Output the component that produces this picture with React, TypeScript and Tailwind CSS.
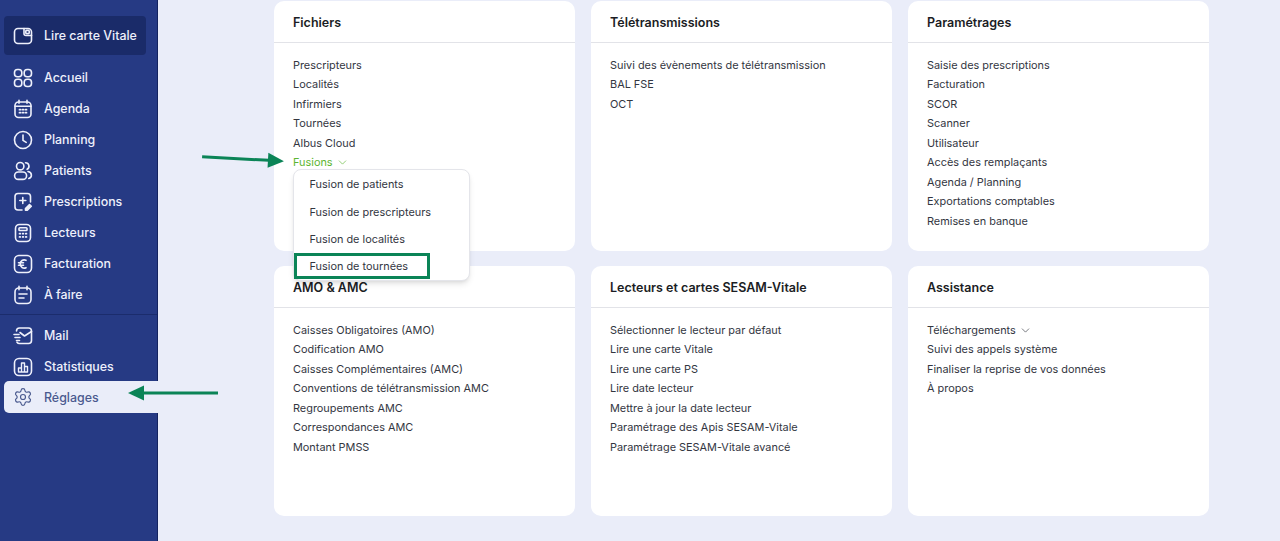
import React from "react";
import { Settings, ChevronDown } from "lucide-react";

const iconProps = {
  width: 20,
  height: 20,
  viewBox: "0 0 20 20",
  fill: "none",
  stroke: "currentColor",
  strokeWidth: 1.6,
  strokeLinecap: "round" as const,
  strokeLinejoin: "round" as const,
};

const CardIcon = () => (
  <svg {...iconProps}>
    <rect x="1.500" y="2.500" width="17" height="15" rx="3.500" />
    <path d="M11 2.500v5a2 2 0 0 0 2 2h5.500" />
    <rect x="12.800" y="4.400" width="3.400" height="3.200" rx="0.800" />
  </svg>
);
const HomeIcon = () => (
  <svg {...iconProps}>
    <rect x="1.500" y="1.500" width="7.300" height="7.300" rx="3" />
    <rect x="11.200" y="1.500" width="7.300" height="7.300" rx="3" />
    <rect x="1.500" y="11.200" width="7.300" height="7.300" rx="3" />
    <rect x="11.200" y="11.200" width="7.300" height="7.300" rx="3" />
  </svg>
);
const AgendaIcon = () => (
  <svg {...iconProps}>
    <rect x="2" y="3" width="16" height="15.500" rx="3.500" />
    <path d="M2 7.200h16M6 1.300v3M14 1.300v3" />
    <path d="M6.500 10.700h1M9.500 10.700h1M12.500 10.700h1M6.500 13.700h1M9.500 13.700h1M12.500 13.700h1" strokeWidth="1.800" />
  </svg>
);
const ClockIcon = () => (
  <svg {...iconProps}>
    <circle cx="10" cy="10" r="8.500" />
    <path d="M10 5v5.400l3.200 2" />
  </svg>
);
const PatientsIcon = () => (
  <svg {...iconProps}>
    <circle cx="7.200" cy="5.200" r="3.700" />
    <rect x="1.600" y="11" width="12" height="7.400" rx="3.700" />
    <path d="M12.500 1.700a3.500 3.500 0 0 1 1.600 6.600M15 10.500c2.200.4 3.400 1.900 3.400 3.700 0 1.600-1 2.800-2.600 3.300" />
  </svg>
);
const PrescriptionIcon = () => (
  <svg {...iconProps}>
    <path d="M9 18H5a3 3 0 0 1-3-3V4.500a3 3 0 0 1 3-3h9.500a3 3 0 0 1 3 3V10" />
    <path d="M9.800 5.500v6M6.800 8.500h6" />
    <path d="M12.500 18.300v-1.800l4-4 1.800 1.800-4 4z" fill="currentColor" />
  </svg>
);
const LecteurIcon = () => (
  <svg {...iconProps}>
    <rect x="2.500" y="1.500" width="15" height="17" rx="4" />
    <rect x="6" y="4.700" width="8" height="2.800" rx="0.800" />
    <path d="M6.500 10.700h.8M9.600 10.700h.8M12.700 10.700h.8M6.500 13.900h.8M9.600 13.900h.8M12.700 13.900h.8" strokeWidth="1.700" />
  </svg>
);
const EuroIcon = () => (
  <svg {...iconProps}>
    <rect x="1.500" y="1.500" width="17" height="17" rx="4.500" />
    <path d="M13 6.300a4 4 0 0 0-5.800 3.700A4 4 0 0 0 13 13.700M5.500 8.800h5M5.500 11.200h5" />
  </svg>
);
const TodoIcon = () => (
  <svg {...iconProps}>
    <rect x="2" y="3" width="16" height="15.500" rx="4" />
    <path d="M6 1.300v3.400M14 1.300v3.400M6 9h8M6 13h5" />
  </svg>
);
const MailIcon = () => (
  <svg {...iconProps}>
    <path d="M3.500 5V5a3 3 0 0 1 3-3h9a3 3 0 0 1 3 3v9.500a3 3 0 0 1-3 3h-9a3 3 0 0 1-2.500-1.300" />
    <path d="M7 6.500l4.500 3.500 7-4.500" />
    <path d="M1 8.500h5M2 11.500h5M3.500 14.500h3" />
  </svg>
);
const StatsIcon = () => (
  <svg {...iconProps}>
    <rect x="1.500" y="1.500" width="17" height="17" rx="4.500" />
    <path d="M5.500 15v-4h3V15M8.500 15V6h3v9M11.500 15v-5.500h3V15H5.500" strokeWidth="1.400" />
  </svg>
);

const navTop = [
  { label: "Accueil", icon: <HomeIcon /> },
  { label: "Agenda", icon: <AgendaIcon /> },
  { label: "Planning", icon: <ClockIcon /> },
  { label: "Patients", icon: <PatientsIcon /> },
  { label: "Prescriptions", icon: <PrescriptionIcon /> },
  { label: "Lecteurs", icon: <LecteurIcon /> },
  { label: "Facturation", icon: <EuroIcon /> },
  { label: "À faire", icon: <TodoIcon /> },
];

const NavItem = ({ label, icon }: { label: string; icon: React.ReactNode }) => (
  <div className="flex h-[31px] items-center gap-[11px] pl-[13px] text-[12.4px] font-medium text-[#eef0fb]">
    <span className="shrink-0">{icon}</span>
    <span className="pt-px">{label}</span>
  </div>
);

const cards = [
  {
    title: "Fichiers",
    items: ["Prescripteurs", "Localités", "Infirmiers", "Tournées", "Albus Cloud"],
    fusions: true,
  },
  {
    title: "Télétransmissions",
    items: ["Suivi des évènements de télétransmission", "BAL FSE", "OCT"],
  },
  {
    title: "Paramétrages",
    items: [
      "Saisie des prescriptions",
      "Facturation",
      "SCOR",
      "Scanner",
      "Utilisateur",
      "Accès des remplaçants",
      "Agenda / Planning",
      "Exportations comptables",
      "Remises en banque",
    ],
  },
  {
    title: "AMO & AMC",
    items: [
      "Caisses Obligatoires (AMO)",
      "Codification AMO",
      "Caisses Complémentaires (AMC)",
      "Conventions de télétransmission AMC",
      "Regroupements AMC",
      "Correspondances AMC",
      "Montant PMSS",
    ],
  },
  {
    title: "Lecteurs et cartes SESAM-Vitale",
    items: [
      "Sélectionner le lecteur par défaut",
      "Lire une carte Vitale",
      "Lire une carte PS",
      "Lire date lecteur",
      "Mettre à jour la date lecteur",
      "Paramétrage des Apis SESAM-Vitale",
      "Paramétrage SESAM-Vitale avancé",
    ],
  },
  {
    title: "Assistance",
    items: ["Téléchargements", "Suivi des appels système", "Finaliser la reprise de vos données", "À propos"],
  },
];

const fusionMenu = ["Fusion de patients", "Fusion de prescripteurs", "Fusion de localités", "Fusion de tournées"];

// green annotation arrows drawn over the page
const Arrow = ({ className, flip, width }: { className: string; flip?: boolean; width: number }) => (
  <svg
    className={`absolute ${className}`}
    width={width}
    height="16"
    viewBox={`0 0 ${width} 16`}
    fill="#0b8457"
    style={flip ? { transform: "scaleX(-1)" } : undefined}
  >
    <path d={`M0 6.500h${width - 15}v3H0z`} />
    <path d={`M${width - 16} 0.500l16 7.500-16 7.500z`} />
  </svg>
);

export default function App() {
  return (
    <div
      className="relative flex h-[541px] w-[1280px] overflow-hidden bg-[#eaedf9] text-[#33363f]"
      style={{ fontFamily: "Inter, 'Liberation Sans', sans-serif" }}
    >
      {/* sidebar */}
      <aside className="h-full w-[158px] shrink-0 border-r border-r-[#14235f] bg-[#263a84] pt-4">
        <div className="mb-[7px] ml-1 flex h-[39px] w-[142px] items-center gap-[11px] rounded-[4px] bg-[#1a2b69] pl-[9px] text-[12.4px] font-medium text-[#eef0fb]">
          <span className="shrink-0">
            <CardIcon />
          </span>
          <span className="whitespace-nowrap pt-px">Lire carte Vitale</span>
        </div>
        {navTop.map((n) => (
          <NavItem key={n.label} label={n.label} icon={n.icon} />
        ))}
        <div className="mt-1 mb-[5px] h-px bg-[#1b2c6c]" />
        <NavItem label="Mail" icon={<MailIcon />} />
        <NavItem label="Statistiques" icon={<StatsIcon />} />
        <div className="-mt-px ml-1 flex h-[32px] w-[154px] items-center gap-[11px] rounded-l-[5px] bg-[#eaedf9] pl-[9px] text-[12.4px] font-medium text-[#4a5a8f]">
          <Settings size={20} strokeWidth={1.4} />
          <span className="pt-[3px]">Réglages</span>
        </div>
      </aside>

      {/* cards */}
      <main className="grid h-[516px] grid-cols-[301px_301px_301px] grid-rows-[250px_250px] gap-x-[16px] gap-y-[15px] pt-px pl-[116px]">
        {cards.map((card) => (
          <section key={card.title} className="relative rounded-[10px] bg-white">
            <h2 className="flex h-[42px] items-center border-b border-b-[#e2e3e8] pt-[3px] pl-[19px] text-[12.5px] font-semibold text-[#1b1d24]">
              {card.title}
            </h2>
            <ul className="pt-[12.500px] pl-[19px] text-[10.9px] leading-[19.5px]">
              {card.items.map((item) => (
                <li key={item} className="flex items-center gap-[3px]">
                  {item}
                  {item === "Téléchargements" && <ChevronDown size={13} strokeWidth={1.2} />}
                </li>
              ))}
              {card.fusions && (
                <li className="flex items-center gap-[3px] text-[#5cb531]">
                  Fusions <ChevronDown size={13} strokeWidth={1.2} />
                </li>
              )}
            </ul>
            {card.fusions && (
              <div className="absolute top-[168px] left-[19px] z-10 w-[177px] rounded-[8px] border border-[#e4e5ea] bg-white pt-px shadow-md">
                {fusionMenu.map((m) => (
                  <div key={m} className="flex h-[27.3px] items-center pl-[15.5px] text-[10.9px]">
                    {m}
                  </div>
                ))}
              </div>
            )}
          </section>
        ))}
      </main>

      {/* annotations */}
      <div className="absolute top-[253px] left-[294px] z-20 h-[26px] w-[136px] border-[3px] border-[#0b8457]" />
      <Arrow className="top-[151px] left-[202px] rotate-[3deg]" width={82} />
      <Arrow className="top-[385px] left-[128px]" width={90} flip />
    </div>
  );
}
